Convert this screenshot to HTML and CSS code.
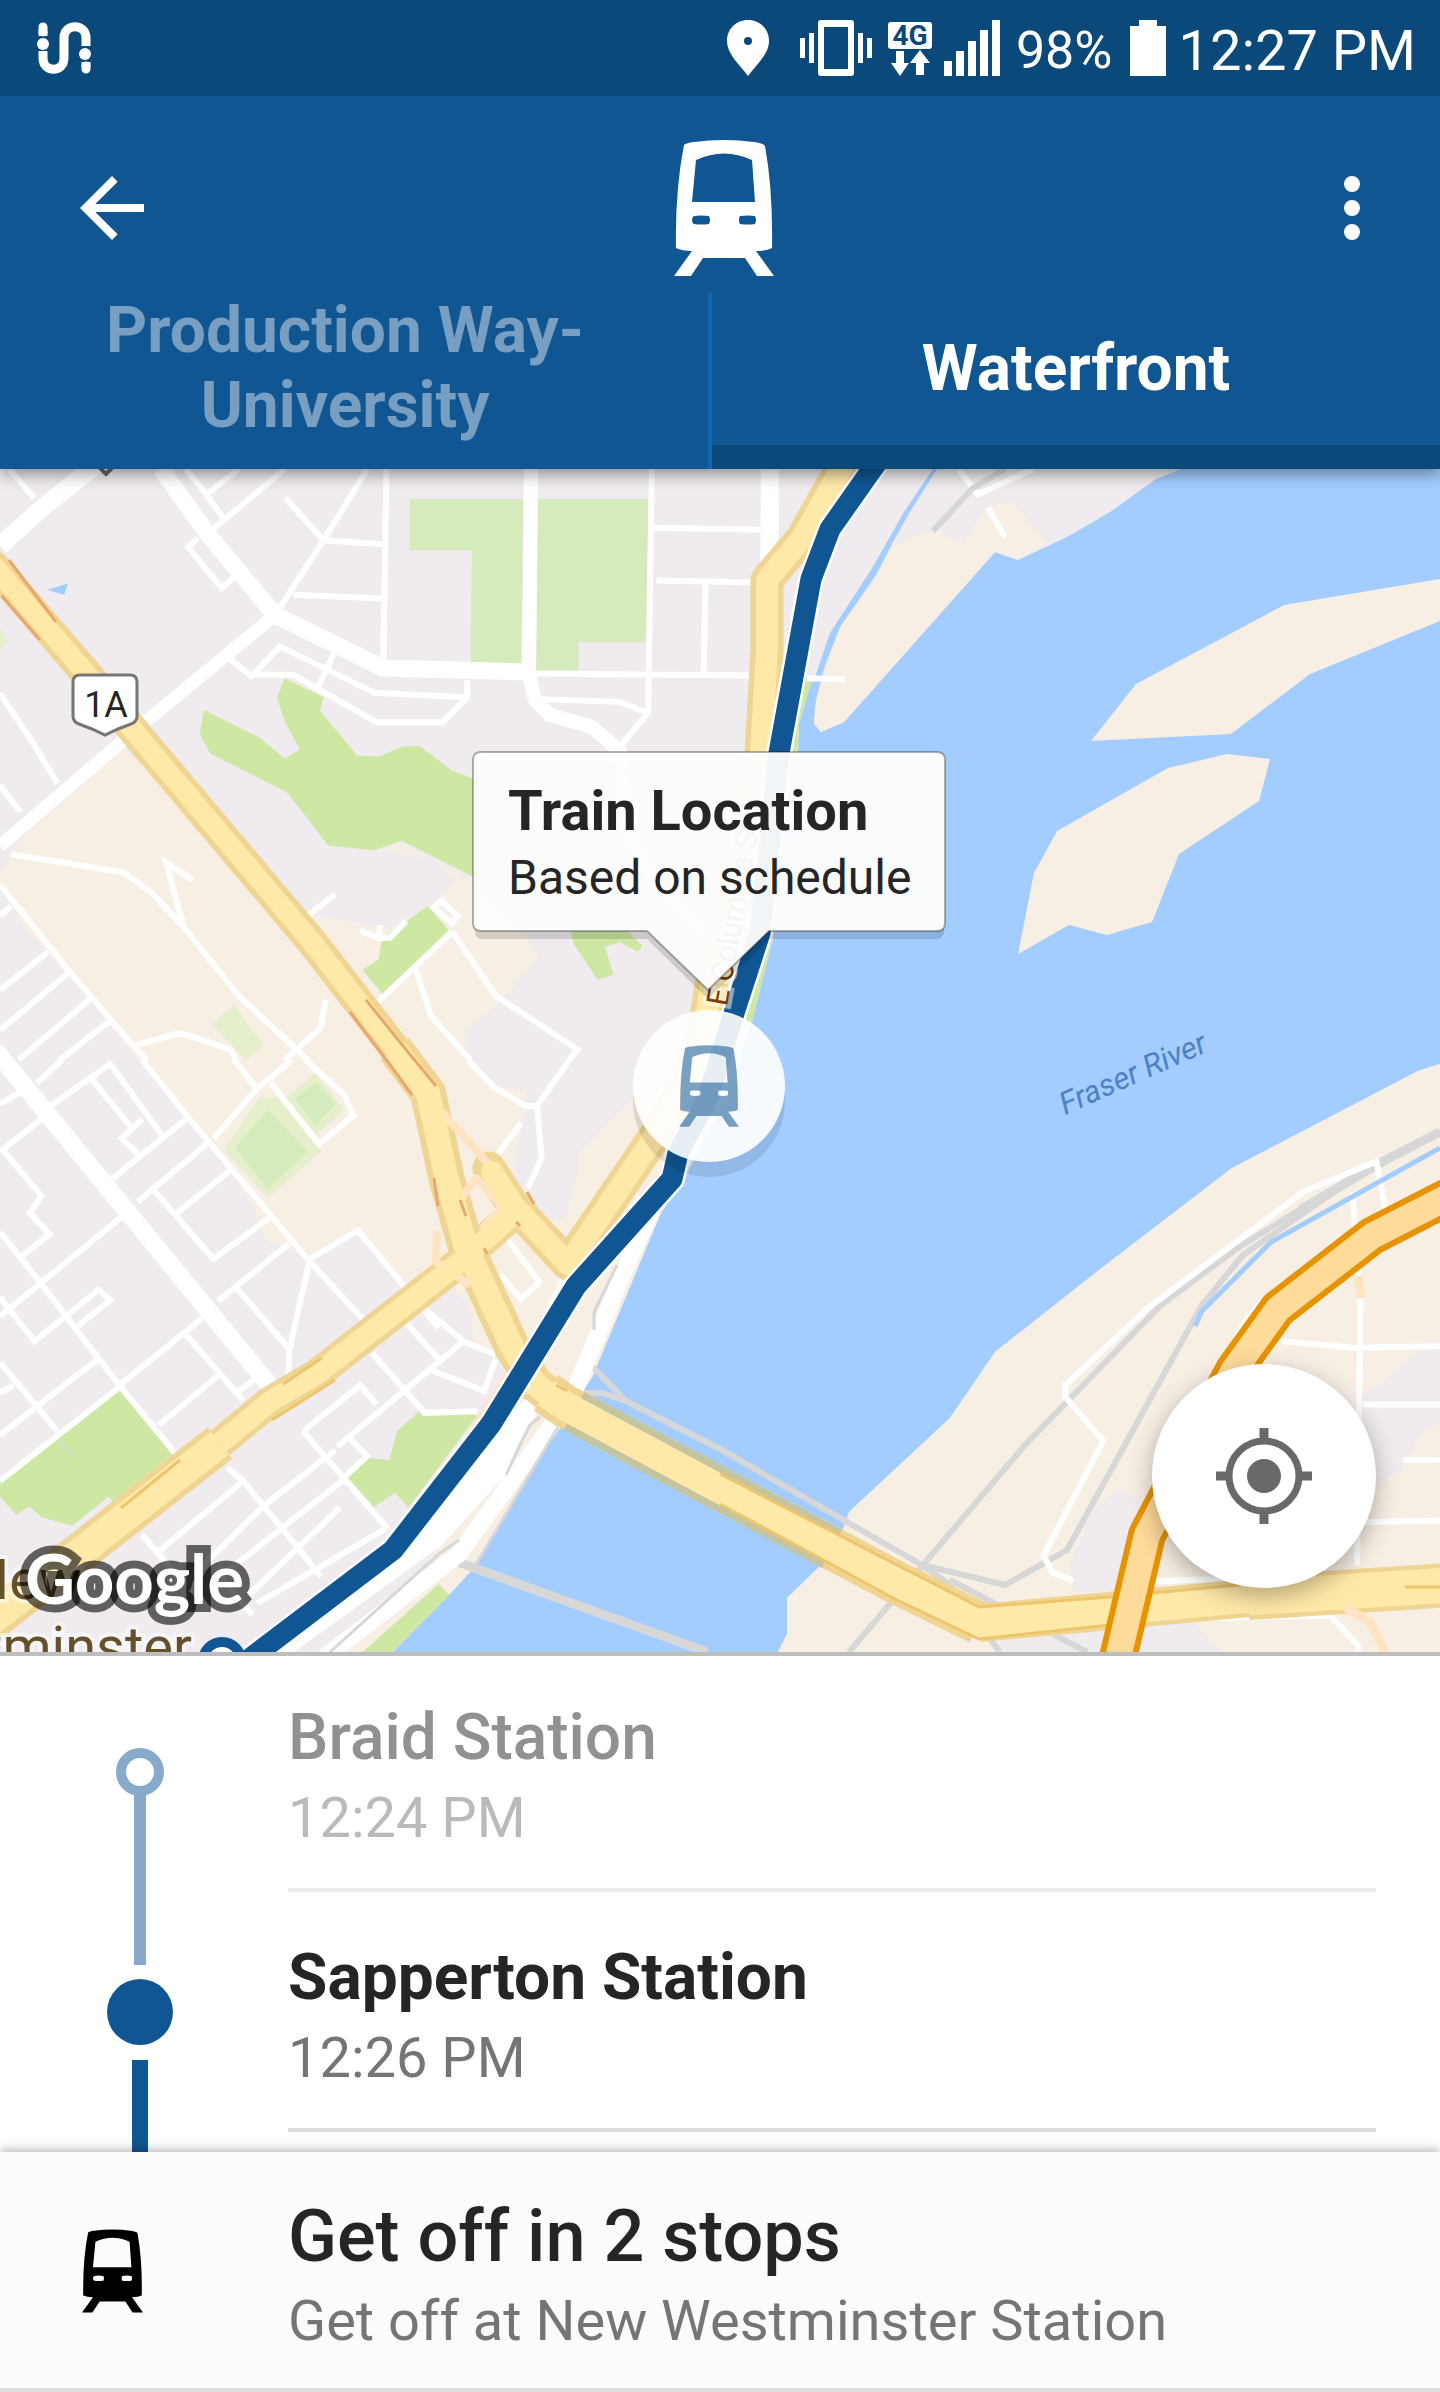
FILE: index.html
```html
<!DOCTYPE html>
<html lang="en">
<head>
<meta charset="utf-8">
<meta name="viewport" content="width=device-width, initial-scale=1">
<title>Train to Waterfront</title>
<link rel="stylesheet" href="styles.css">
</head>
<body>
<svg class="defs" aria-hidden="true">
  <symbol id="train" viewBox="0 0 100 136">
    <path fill-rule="evenodd" d="M10 5Q12 3 20 2Q50-2 80 2Q89 3 91 6Q99 50 98 108Q92 111 82 111L100 136H83L71 118H29L17 136H0L18 111Q8 111 2 108Q1 50 10 5ZM22 20L18 62H81L78 20Q50 7 22 20ZM20 76Q18 77 18 80T20 84Q27 85 35 84Q36 82 36 80T35 76Q27 75 20 76ZM66 76Q65 77 65 80T66 84Q74 85 81 84Q82 82 82 80T81 76Q74 75 66 76Z"/>
  </symbol>
</svg>

<header class="header">
  <div class="status">
    <svg class="status-logo" viewBox="0 0 54 52" width="54" height="52" aria-hidden="true">
      <g fill="none" stroke="#fff" stroke-width="9" stroke-linecap="round">
        <path d="M6 5V10M49 47V44"/>
        <path stroke-linecap="butt" d="M6 29V36C6 51 27 51 27 36V16C27 1 49 1 49 16V24"/>
      </g>
      <path d="M0 15H12M0 28H12M42 25H54M42 38H54" stroke="#0b497b"/>
      <circle cx="6" cy="22" r="6" fill="#fff"/><circle cx="48" cy="32" r="6" fill="#fff"/>
      <path d="M6 9V14M49 40V45" stroke="#fff" stroke-width="9"/>
    </svg>
    <div class="status-icons">
      <svg class="pin" viewBox="0 0 42 56" width="42" height="56" aria-hidden="true"><path fill="#fff" fill-rule="evenodd" d="M21 0C9 0 0 9 0 21C0 34 12 44 21 56C30 44 42 34 42 21C42 9 33 0 21 0ZM21 17A4 4 0 1 1 21 25A4 4 0 1 1 21 17Z"/></svg>
      <svg class="vibrate" viewBox="0 0 72 56" width="72" height="56" aria-hidden="true"><path fill="#fff" fill-rule="evenodd" d="M21 0H51Q54 0 54 3V53Q54 56 51 56H21Q18 56 18 53V3Q18 0 21 0ZM24 7V49H48V7ZM0 18H5V38H0ZM9 13H14V43H9ZM58 13H63V43H58ZM67 18H72V38H67Z"/></svg>
      <svg class="network" viewBox="0 0 44 56" width="44" height="56" role="img" aria-label="4G"><rect y="2" width="44" height="27" rx="3" fill="#fff"/><text x="22" y="25" text-anchor="middle" class="network-label">4G</text><path fill="#fff" d="M8 31H16V43H21L12 56L3 43H8ZM28 55V43H22L32 30L42 43H36V55Z"/></svg>
      <svg class="signal" viewBox="0 0 56 56" width="56" height="56" aria-hidden="true"><path fill="#fff" d="M0 41H8V56H0ZM12 31H20V56H12ZM24 21H32V56H24ZM36 10H44V56H36ZM48 0H56V56H48Z"/></svg>
      <span class="battery-level">98%</span>
      <svg class="battery" viewBox="0 0 36 56" width="36" height="56" aria-hidden="true"><path fill="#fff" d="M9 0H27V6H36V56H0V6H9Z"/></svg>
      <time class="clock">12:27 PM</time>
    </div>
  </div>
  <div class="toolbar">
    <button class="icon-button" type="button" aria-label="Back"><svg viewBox="0 0 24 24" width="96" height="96"><path fill="#fff" d="M20 11H7.83l5.59-5.59L12 4l-8 8 8 8 1.41-1.41L7.83 13H20z"/></svg></button>
    <svg class="toolbar-train" width="100" height="136" role="img" aria-label="Train"><use href="#train"/></svg>
    <button class="icon-button" type="button" aria-label="More options"><svg viewBox="0 0 24 24" width="96" height="96"><path fill="#fff" d="M12 8a2 2 0 1 0 0-4 2 2 0 0 0 0 4zm0 2a2 2 0 1 0 0 4 2 2 0 0 0 0-4zm0 6a2 2 0 1 0 0 4 2 2 0 0 0 0-4z"/></svg></button>
  </div>
  <nav class="tabs">
    <button class="tab" type="button">Production Way-<br>University</button>
    <button class="tab tab-active" type="button">Waterfront</button>
  </nav>
</header>

<main class="map">
  <svg class="map-canvas" viewBox="0 469 1440 1183" preserveAspectRatio="xMidYMid slice" aria-hidden="true">
    <rect y="469" width="1440" height="1183" fill="#efebef"/>

    <!-- built-up ground -->
    <g class="sand">
      <path d="M124 749L23 837L0 875V885L23 925L92 1003L138 1060L213 1142L250 1202L266 1240L294 1251L310 1259L358 1230L413 1290L450 1286L468 1305L475 1343L530 1366L560 1270L514 1175L526 1091L500 1087L466 1060V1030L500 1003L539 956L523 933L470 880L402 843L381 850L436 860L455 883L432 904L390 929L312 915Z"/>
      <path d="M640 1090L576 1156L578 1170L565 1219H520L510 1250L530 1360L500 1400L430 1560L330 1652H393L450 1594L473 1569L558 1427L592 1378L620 1311L661 1213L684 1179L700 1090Z"/>
    </g>

    <!-- river -->
    <path class="water" d="M1181 469L1156 479L1110 512L1067 537L1018 560L995 552L844 722L821 732L812 678L799 724L798 753L774 934L752 1021L725 1100L684 1179L661 1213L620 1311L592 1378L558 1427L473 1569L450 1594L393 1652H778L787 1634V1598L821 1565L840 1538L849 1512L950 1418L995 1352L1099 1270L1232 1168L1303 1131L1418 1071L1440 1064V469Z"/>
    <g class="sand">
      <path d="M778 1652L787 1634V1598L821 1565L840 1538L849 1512L950 1418L995 1352L1099 1270L1232 1168L1303 1131L1418 1071L1440 1064V1652Z"/>
      <path d="M995 552L844 722L821 732L814 724L815 703L827 667L840 626L874 582L892 546L933 529L963 544L986 508L1012 501L1047 542L1018 560Z"/>
      <path d="M1440 579L1284 605L1136 684L1091 741L1231 734L1310 674L1440 621Z"/>
      <path d="M1227 754L1270 759L1259 801L1179 854L1152 922L1107 935L1069 925L1018 954L1034 873L1057 831L1168 768Z"/>
    </g>
    <path class="water" d="M933 469L904 512L871 570L830 633L816 674L811 690L812 730L816 700L825 665L840 627L876 575L894 540L911 510L937 469Z"/>
    <path fill="#efebef" d="M1117 1490L1140 1500L1125 1592H1073L1070 1565L1090 1515ZM1000 1640L1190 1618L1220 1652H1000ZM1440 1339L1418 1351L1381 1385L1360 1393V1490L1400 1473L1422 1431L1440 1425Z"/>

    <!-- parks -->
    <g transform="translate(0 460) scale(.459 .3827)">
      <path class="park" d="M620 570L705 620L697 655L778 772L825 775L880 748H915L985 812L1030 832L1100 870L1200 1000L1300 1150L1400 1270L1390 1285L1350 1260L1318 1272L1337 1345L1302 1358L1250 1265L1230 1170L1030 1088L875 995L815 1020L715 1007L625 868L458 767L435 715L445 653L565 725L620 780L653 757L620 680L603 622ZM932 1165L980 1232L833 1396L790 1332L825 1305L832 1250Z"/>
      <path class="field" d="M893 102H1140L1135 535H1025L1028 236H893ZM1172 102H1414L1408 476H1260V550H1168Z"/>
      <path class="lawn" d="M510 1425L573 1530L535 1568L462 1475ZM0 440L18 470L0 495Z"/>
      <path class="water" d="M103 340L148 323L140 352Z"/>
    </g>
    <g transform="translate(0 1060) scale(.459 .3827)">
      <path class="lawn" d="M565 98H605L700 240L583 360L488 235ZM685 35L750 130L690 195L622 100Z"/>
      <path class="field" d="M585 130L670 240L583 337L512 228ZM687 58L732 115L687 170L643 102Z"/>
      <path class="park" d="M260 857L385 1045L260 1175L237 1140L158 1217L90 1195L65 1167L35 1188L0 1140V1105ZM913 918L1040 928L890 1170L860 1130L815 1168L757 1090L800 1040L848 1045L865 970ZM955 1370L980 1397L855 1547H790Z"/>
      <path d="M128 997L162 1040" class="rail" stroke-width="4"/>
    </g>
    <path class="park" d="M805 678L812 680L799 724L798 753L774 934L752 1021L730 1040L760 900L780 740Z"/>

    <!-- side streets -->
    <g class="street" transform="translate(0 460) scale(.459 .3827)">
      <path d="M20 24L75 100M405 24L450 90L485 150M450 90L520 24M465 180L620 24M430 205L410 228L483 335L510 305M800 24L705 210L610 385M622 100L705 210L835 220M640 352L830 362M842 24L835 530M1420 24L1412 660L1350 750M1425 177L1658 182M1430 315L1648 320M1537 320L1533 560M1155 558L1643 563"/>
      <path d="M500 520L548 565L610 487L815 608L1015 620M548 560L640 562L820 685H965L1018 620V575M728 505L690 600M1180 625L1350 632L1410 660M0 610L70 735L125 845M0 850L45 920M25 1030L270 1078L330 1130L400 1220L520 1400L650 1545M420 1098L362 1052L400 1220M0 1110L150 1335L290 1530L320 1568M0 1190L25 1165M0 1385L105 1285M0 1490L150 1340M40 1568L195 1410M130 1568L240 1465M290 1530L395 1497L500 1540L515 1568M710 1410L698 1485L620 1568M650 1545L670 1568"/>
      <path d="M665 1195L730 1135M785 1230L825 1250L850 1248L885 1205M828 1215L825 1250M945 1170L962 1152L997 1192L985 1210ZM985 1232L820 1420M985 1232L1080 1400L1258 1540L1240 1568M905 1330L940 1455L1025 1568M1758 570L1840 573M2088 24L2130 90L2250 24M2153 125L2190 202"/>
    </g>
    <g class="street" transform="translate(0 1060) scale(.459 .3827)">
      <path d="M310 0L410 150L670 520L800 690M675 520L630 760L628 840M675 520L780 445L955 700M810 765L925 922L1040 918M0 450L80 570L260 850L390 1040M80 60L135 0M0 115L50 80M0 240L95 150M110 120L240 10L355 200M200 50L285 175M310 155L265 205L300 245M245 310L410 150M300 370L455 215M335 340L465 520L590 410M385 400L505 285M10 240L90 355L65 400L108 455L40 520M0 670L265 410M0 620L75 735L215 600L240 628L170 695"/>
      <path d="M475 630L630 480M515 595L630 755M260 850L440 675M400 710L530 890M345 955L480 820M515 870L560 830M0 790L125 970M0 1100L260 855M0 980L215 780M0 870L30 850M495 1065L530 1100L700 1350M310 1240L400 1370M340 1290L530 1100M400 1370L575 1165L730 1020M660 970L785 850L820 900M660 970L845 1225M735 1010L1010 735L1080 770M875 600L1010 735M880 680L955 780M940 810L1055 865L1080 780M760 985L800 1035L750 1090M480 1350L750 1095M540 1400L740 1170M560 1420L840 1225M480 1350L550 1450"/>
      <path d="M1020 0L1075 70L1145 120H1170L1240 0M1170 120L1180 255L1150 335M1135 165L1085 245M510 0L560 75L465 205M560 75L635 0M590 60L695 220L770 145L750 90L665 0M1100 460L1175 580L1135 625L1090 560"/>
    </g>

    <!-- railways and industrial roads -->
    <path class="rail" stroke-width="6" d="M933 531L973 488L1005 469M592 1366L626 1401L720 1449L922 1565L1005 1585L1067 1550L1202 1305L1243 1255L1376 1163L1440 1132M581 1393H602L626 1401M849 1652L1025 1445L1161 1305L1239 1247L1376 1163M922 1565L950 1585L1000 1652M950 1580L1087 1652"/>
    <path class="rail" stroke-width="9" d="M455 1561L707 1652M1300 1210L1380 1163L1440 1132"/>
    <g class="street" transform="translate(720 1060) scale(.459 .3827)">
      <path d="M770 1360L725 1340L705 1295L835 995L752 880V850L930 650L1270 345L1430 265L1450 390M1378 345L1395 640L1388 1320M1225 735L1380 752L1568 748M1400 900H1568M1488 1045H1568M1400 1208L1568 1203M950 1362L1100 1355M960 1460L1330 1452L1390 1530V1547M1180 630L1140 690L1110 770"/>
    </g>
    <path d="M1440 1148L1271 1242L1202 1311L1195 1326" fill="none" stroke="#a3cdff" stroke-width="5"/>

    <!-- main streets -->
    <g fill="none" stroke="#fff" stroke-linejoin="round">
      <path stroke-width="17" d="M161 469L207 533L275 615L383 668L530 672"/>
      <path stroke-width="14" d="M531 460L529 675L535 700L550 715L592 727L620 751L626 830L660 890L705 930"/>
      <path stroke-width="18" d="M96 465L42 508L0 546M770 469L769 590"/>
      <path stroke-width="13" d="M275 615L138 728L0 846"/>
      <path stroke-width="18" d="M-5 1050L275 1392"/>
      <path stroke-width="17" d="M661 1190L624 1271L572 1397L459 1554L321 1660"/>
    </g>
    <path fill="#fff" d="M528 1397L537 1412L510 1470L441 1546L294 1652H257L404 1554L500 1424ZM562 1275L545 1310L535 1335L560 1300L580 1285Z"/>
    <path class="rail" stroke-width="3" d="M617 1265L594 1312V1330M558 1427L473 1569M540 1417L530 1425L520 1445L506 1475M459 1540L440 1553L330 1652"/>

    <!-- arterial roads -->
    <g fill="none" stroke-linejoin="round">
      <g stroke="#efd591">
        <path stroke-width="31" d="M-10 562L85 672L138 736L312 942L395 1049L430 1096"/>
        <path stroke-width="36" d="M395 1049L428 1093L447 1180L466 1247L512 1347L535 1384L556 1400"/>
        <path stroke-width="40" d="M-10 1622L83 1550L220 1443"/>
        <path stroke-width="31" d="M220 1443L271 1401L317 1374L459 1263L520 1208"/>
        <path stroke-width="33" stroke-linecap="round" d="M489 1168L513 1205L568 1264L657 1133L700 1060L711 985L748 850L761 753L767 650V580L803 537L846 460"/>
        <path stroke-width="43" d="M546 1393L565 1406L720 1489L899 1584L979 1623"/>
        <path stroke-width="38" d="M979 1623L1110 1611L1248 1598"/>
        <path stroke-width="44" d="M1248 1598L1450 1585"/>
      </g>
      <path stroke="#c5c4a0" stroke-width="43" d="M574 1411L720 1489L832 1549"/>
      <g stroke="#ffe4c4" stroke-width="8">
        <path d="M442 1112L490 1166M458 1202L476 1178L502 1206L482 1230M437 1230L436 1262L470 1285M508 1376L460 1450"/>
      </g>
      <g stroke="#ffe9a9">
        <path stroke-width="20" d="M-10 562L85 672L138 736L312 942L395 1049L430 1096"/>
        <path stroke-width="24" d="M395 1049L428 1093L447 1180L466 1247L512 1347L535 1384L556 1400"/>
        <path stroke-width="29" d="M-10 1622L83 1550L220 1443"/>
        <path stroke-width="21" d="M220 1443L271 1401L317 1374L459 1263L520 1208"/>
        <path stroke-width="22" stroke-linecap="round" d="M492 1172L513 1205L568 1264L657 1133L700 1060L711 985L748 850L761 753L767 650V580L803 537L846 460"/>
        <path stroke-width="29" d="M546 1393L565 1406L720 1489L899 1584L979 1623L1110 1611L1248 1598"/>
        <path stroke-width="35" d="M1248 1598L1450 1585"/>
      </g>
      <path stroke="#e9a86b" stroke-width="3" d="M9 560L56 622M2 596L40 640M350 1012L388 1062L412 1095M366 1000L408 1052L436 1086M434 1178L438 1206M460 1200L466 1216M527 1192L534 1204M516 1222L520 1226M484 1248L487 1254"/>
      <path stroke="#eec56d" stroke-width="3" d="M720 1474L905 1569L979 1607L1110 1597L1248 1584M720 1504L895 1599L979 1639L1110 1625M1405 1587H1440M121 1508L180 1460M283 1384L322 1358M272 1420L335 1380M556 1385L567 1391"/>
      <path stroke="#e79300" stroke-width="38" d="M1450 1196L1372 1236L1278 1309L1234 1370L1147 1535L1117 1662"/>
      <path stroke="#ffdb99" stroke-width="26" d="M1450 1196L1372 1236L1278 1309L1234 1370L1147 1535L1117 1662"/>
      <path stroke="#ffe4c4" stroke-width="9" d="M1358 1276L1361 1298M1345 1607L1370 1622L1385 1652"/>
    </g>

    <!-- transit line -->
    <g fill="none" stroke-linejoin="round">
      <path stroke="#fff" stroke-width="26" d="M880 458L830 529L811 579L779 753L760 933L735 1010L707 1100L678 1153L672 1179L576 1286L491 1424L393 1550L248 1660"/>
      <path stroke="#0f5693" stroke-width="21" d="M880 458L830 529L811 579L779 753L760 933L735 1010L707 1100L678 1153L672 1179L576 1286L491 1424L393 1550L248 1660"/>
      <circle cx="222" cy="1661" r="19" fill="#fff" stroke="#0f5693" stroke-width="10"/>
    </g>

    <!-- labels -->
    <path d="M97 465L106 474L115 465" fill="#fff" stroke="#666" stroke-width="4"/>
    <path d="M80 675H130Q137 675 137 682V716Q137 722 131 724L118 729L105 735L92 729L79 724Q73 722 73 716V682Q73 675 80 675Z" fill="#fff" stroke="#757575" stroke-width="3"/>
    <text class="shield-label" x="106" y="717" text-anchor="middle">1A</text>
    <text class="road-label" transform="translate(727 1007) rotate(-80)">E Columbia St</text>
    <text class="water-label" transform="translate(1065 1115) rotate(-24)">Fraser River</text>
    <text class="place-label" x="81" y="1599" text-anchor="end">New</text>
    <text class="place-label" x="192" y="1666" text-anchor="end">Westminster</text>
    <text class="google" x="25" y="1604">Google</text>
  </svg>

  <div class="train-marker">
    <svg width="60" height="84" role="img" aria-label="Train position"><use href="#train"/></svg>
  </div>
  <section class="callout">
    <svg class="callout-shape" viewBox="0 0 474 252" width="474" height="252" aria-hidden="true">
      <path fill="#000" fill-opacity=".14" d="M10 10H464Q472 10 472 18V180Q472 188 464 188H297L236 248L175 188H10Q3 188 3 180V18Z"/>
      <path fill="#fff" fill-opacity=".95" stroke="#000" stroke-opacity=".3" stroke-width="2" d="M9 1H465Q473 1 473 9V172Q473 180 465 180H297L236 239L175 180H9Q1 180 1 172V9Q1 1 9 1Z"/>
    </svg>
    <h2 class="callout-title">Train Location</h2>
    <p class="callout-text">Based on schedule</p>
  </section>
  <button class="locate" type="button" aria-label="My location">
    <svg viewBox="0 0 96 96" width="96" height="96"><g fill="none" stroke="#696969"><circle cx="48" cy="48" r="35" stroke-width="7"/><path stroke-width="9" d="M48 0V13M48 83V96M0 48H13M83 48H96"/></g><circle cx="48" cy="48" r="17" fill="#696969"/></svg>
  </button>
</main>

<ol class="stations">
  <li class="station station-past">
    <svg class="track" viewBox="0 0 96 240" width="96" height="240" aria-hidden="true"><path d="M42 142H54V240H42Z" fill="#87a9ca"/><circle cx="48" cy="120" r="19" fill="#fff" stroke="#87a9ca" stroke-width="10"/></svg>
    <div class="station-body"><h3 class="station-name">Braid Station</h3><time class="station-time">12:24 PM</time></div>
  </li>
  <li class="station station-current">
    <svg class="track" viewBox="0 0 96 240" width="96" height="240" aria-hidden="true"><path d="M42 0H54V73H42Z" fill="#87a9ca"/><path d="M40 168H56V240H40Z" fill="#0f5693"/><circle cx="48" cy="120" r="33" fill="#0f5693"/></svg>
    <div class="station-body"><h3 class="station-name">Sapperton Station</h3><time class="station-time">12:26 PM</time></div>
  </li>
  <li class="station" aria-hidden="true">
    <svg class="track" viewBox="0 0 96 20" width="96" height="20"><path d="M40 0H56V20H40Z" fill="#0f5693"/></svg>
  </li>
</ol>

<footer class="trip">
  <svg class="trip-icon" width="61" height="84" aria-hidden="true"><use href="#train"/></svg>
  <div class="trip-body">
    <h2 class="trip-title">Get off in 2 stops</h2>
    <p class="trip-text">Get off at New Westminster Station</p>
  </div>
</footer>
</body>
</html>
```

FILE: styles.css
```css
* { box-sizing: border-box; }

body {
  margin: 0;
  min-height: 100vh;
  display: flex;
  flex-direction: column;
  background: #fff;
  color: #252525;
  font-family: Roboto, "Open Sans", sans-serif;
}

h2, h3, p, ol { margin: 0; padding: 0; font-weight: 400; }
svg { display: block; flex: none; }
button { border: 0; padding: 0; background: none; font: inherit; cursor: pointer; }
.defs { position: absolute; width: 0; height: 0; }

/* Header */
.header {
  position: relative;
  z-index: 1;
  background: #0f5693;
  color: #fff;
  box-shadow: 0 4px 16px rgba(0, 0, 0, .45);
}
.status {
  display: flex;
  align-items: center;
  justify-content: space-between;
  height: 96px;
  padding: 0 24px 0 37px;
  background: #0b497b;
}
.status-icons { display: flex; align-items: center; }
.pin { margin-right: 31px; }
.vibrate { margin-right: 16px; }
.network { margin-right: 12px; }
.signal { margin-right: 16px; }
.battery { margin: 0 12px 0 18px; }
.network-label { font-size: 28px; font-weight: 700; fill: #0b497b; }
.battery-level, .clock { padding-top: 6px; line-height: 64px; }
.battery-level { font-size: 52px; }
.clock { font-size: 56px; }

.toolbar {
  display: flex;
  align-items: center;
  justify-content: space-between;
  padding: 44px 40px 17px 64px;
}
.toolbar-train { margin-right: 16px; fill: #fff; }

.tabs { display: grid; grid-template-columns: 89fr 91fr; }
.tab {
  min-height: 176px;
  padding: 0 18px 26px 0;
  color: #789fc2;
  font-size: 64px;
  font-weight: 700;
  line-height: 75px;
  border-right: 4px solid #0f67b1;
}
.tab-active {
  padding-right: 0;
  color: #fff;
  border-right: 0;
  box-shadow: inset 0 -24px #0b497b;
}

/* Map */
.map {
  position: relative;
  flex: 1;
  min-height: 720px;
  overflow: hidden;
}
.map-canvas { position: absolute; inset: 0; width: 100%; height: 100%; }
.sand { fill: #f7eee4; }
.water { fill: #a3cdff; }
.park { fill: #cee8a4; }
.field { fill: #d5ebbc; }
.lawn { fill: #e5efcc; }
.rail { fill: none; stroke: #d7d7d7; }
.street path { fill: none; stroke: #fff; stroke-width: 6px; vector-effect: non-scaling-stroke; }
.shield-label { font-size: 36px; fill: #252525; }
.road-label {
  font-size: 30px;
  fill: #7b3c00;
  stroke: rgba(255, 255, 255, .5);
  stroke-width: 8px;
  paint-order: stroke;
}
.water-label { font-size: 31px; font-style: italic; fill: #4e81c4; }
.place-label {
  font-size: 56px;
  fill: #64512a;
  stroke: rgba(255, 255, 255, .5);
  stroke-width: 8px;
  paint-order: stroke;
}
.google {
  font-family: Lato, sans-serif;
  font-size: 69px;
  font-weight: 700;
  fill: #fff;
  stroke: rgba(0, 0, 0, .6);
  stroke-width: 16px;
  paint-order: stroke;
}

.train-marker {
  position: absolute;
  top: calc(50% - 51px);
  left: calc(50% - 87px);
  display: grid;
  place-items: center;
  width: 152px;
  height: 152px;
  border-radius: 50%;
  background: rgba(255, 255, 255, .9);
  box-shadow: 0 15px rgba(0, 0, 0, .1);
}
.train-marker svg { fill: #0f5693; opacity: .55; }

.callout {
  position: absolute;
  top: calc(50% - 310px);
  left: calc(50% - 248px);
  width: 474px;
  padding: 28px 36px;
  white-space: nowrap;
}
.callout-shape { position: absolute; top: 0; left: 0; }
.callout-title { position: relative; font-size: 56px; font-weight: 700; line-height: 64px; }
.callout-text { position: relative; font-size: 48px; line-height: 70px; }

.locate {
  position: absolute;
  right: 64px;
  bottom: 64px;
  display: grid;
  place-items: center;
  width: 224px;
  height: 224px;
  border-radius: 50%;
  background: #fff;
  box-shadow: 0 8px 24px rgba(0, 0, 0, .3);
}

/* Station list */
.stations { list-style: none; box-shadow: inset 0 4px #bdbdbd; }
.station { display: flex; padding: 0 64px 0 92px; }
.station-body {
  flex: 1;
  margin-left: 100px;
  padding-top: 48px;
  border-bottom: 4px solid #dcdcdc;
}
.station-name { margin-bottom: 4px; font-size: 64px; font-weight: 700; line-height: 76px; }
.station-time { display: block; color: #757575; font-size: 56px; line-height: 76px; }
.station-past .station-body { border-color: #eee; }
.station-past .station-name { color: #919191; font-weight: 500; }
.station-past .station-time { color: #bababa; }

/* Trip instruction */
.trip {
  position: relative;
  display: flex;
  align-items: center;
  gap: 145px;
  min-height: 240px;
  padding: 2px 64px 0 82px;
  background: #fafbfd;
  border-bottom: 4px solid #dcdcdc;
  box-shadow: 0 -2px 10px rgba(0, 0, 0, .3);
}
.trip-body { padding-top: 12px; }
.trip-title { font-size: 72px; font-weight: 500; line-height: 88px; }
.trip-text { color: #757575; font-size: 56px; line-height: 80px; }
```
